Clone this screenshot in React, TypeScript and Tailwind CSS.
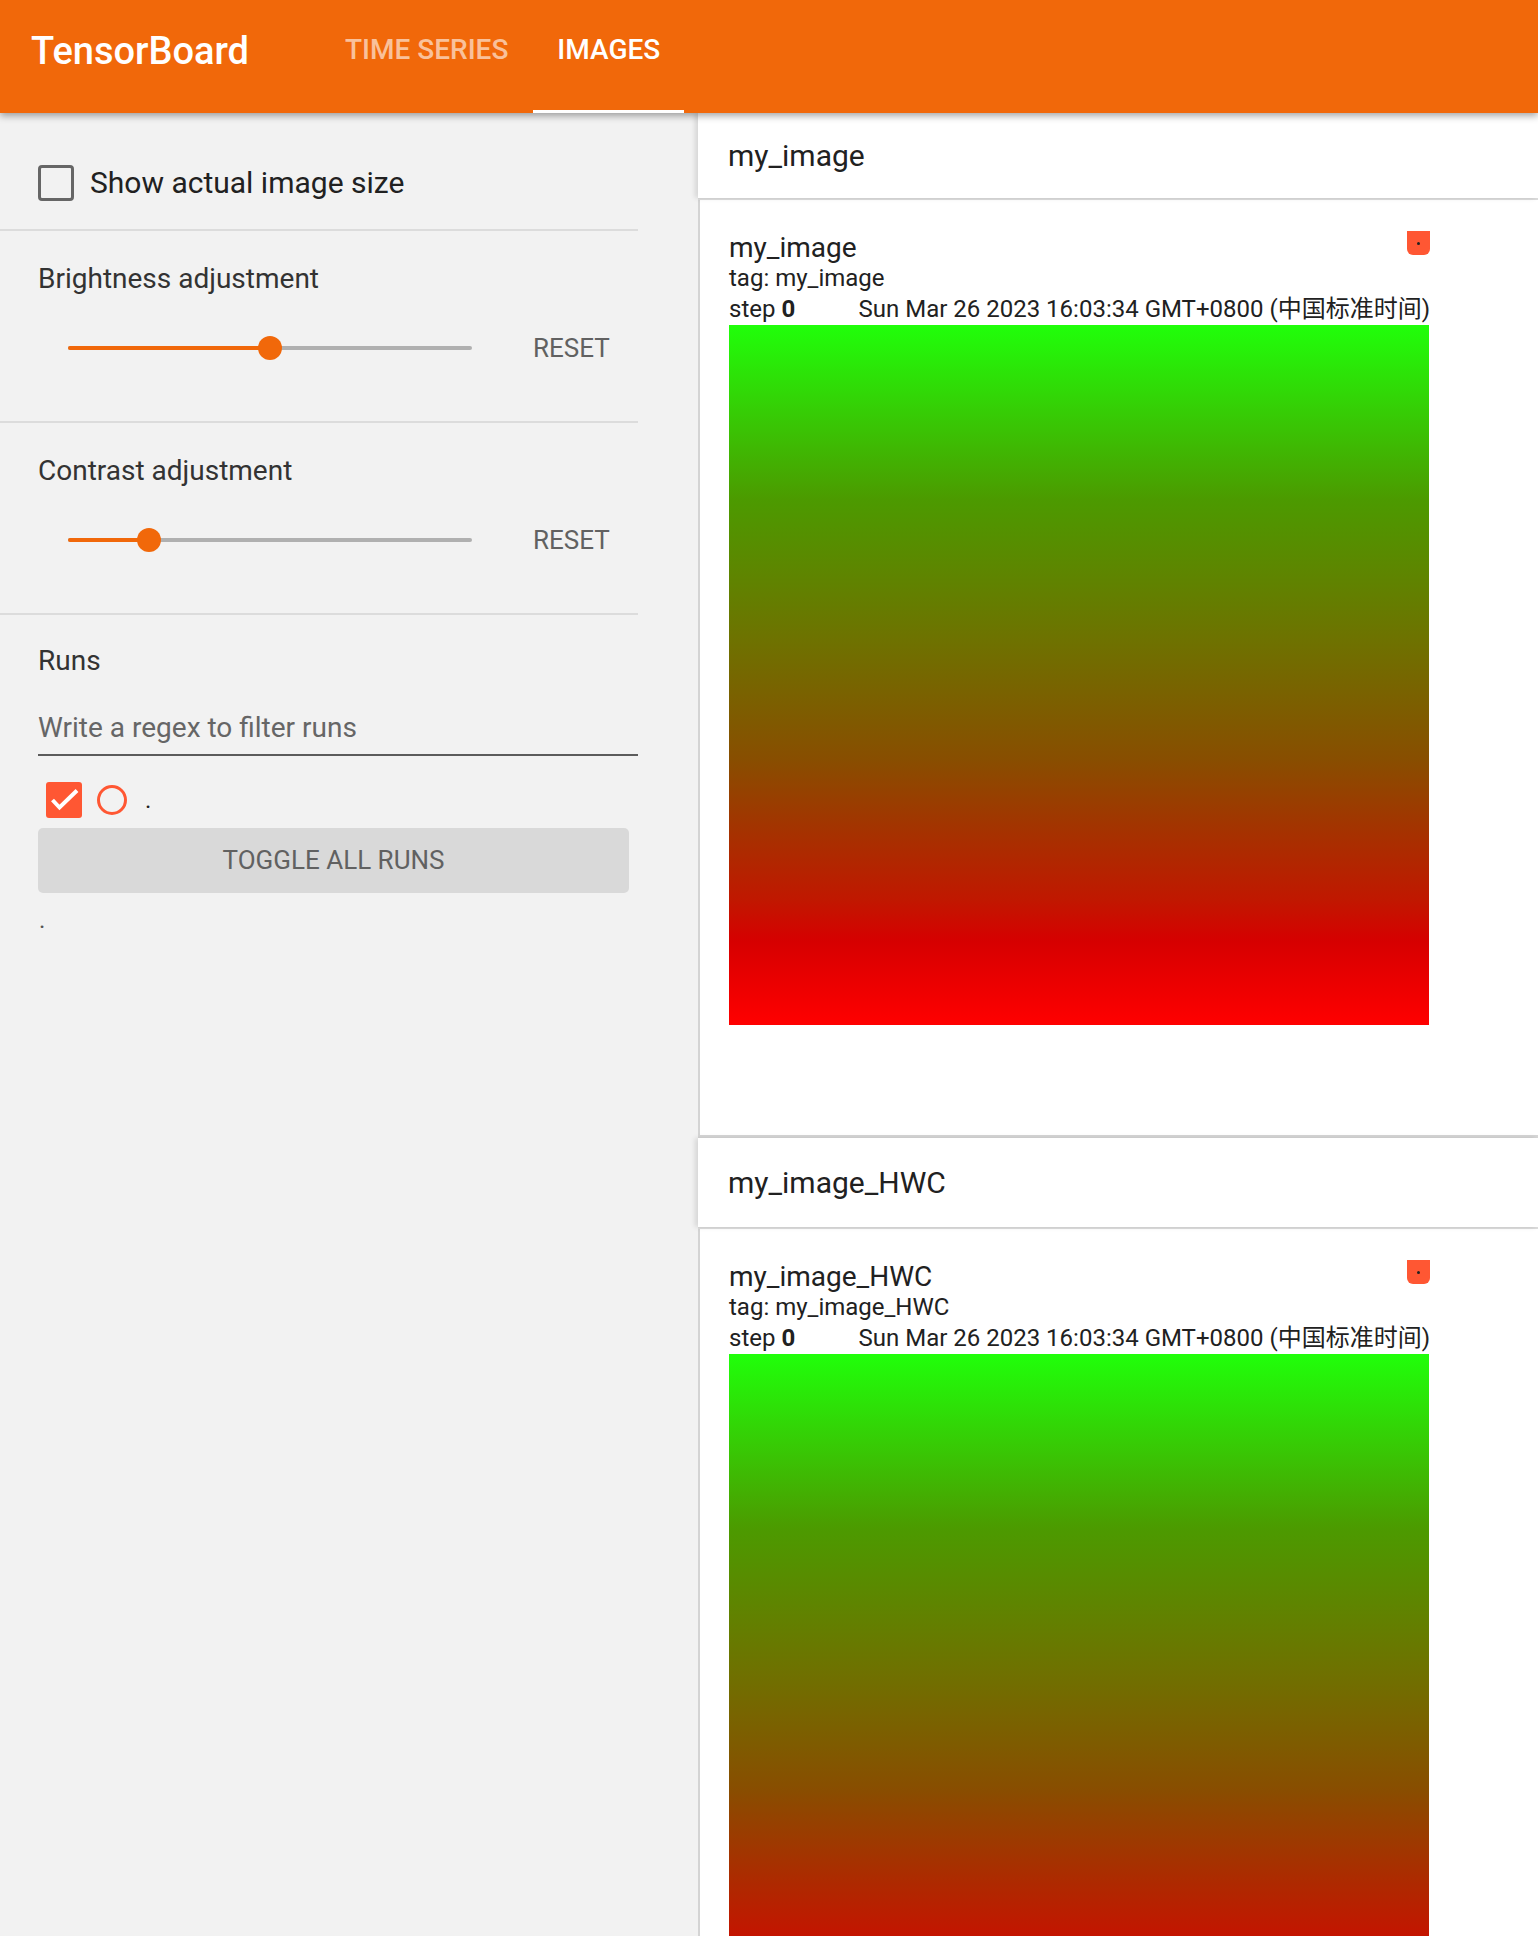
import React from "react";

function Slider({ value }: { value: number }) {
  const pct = `${value * 100}%`;
  return (
    <div className="relative w-[404px] h-[48px] ml-[30px]">
      <div className="absolute left-0 right-0 top-1/2 -translate-y-1/2 h-[4px] rounded-full bg-[#b0b0b0]" />
      <div
        className="absolute left-0 top-1/2 -translate-y-1/2 h-[4px] rounded-full bg-[#f1680a]"
        style={{ width: pct }}
      />
      <div
        className="absolute top-1/2 -translate-x-1/2 -translate-y-1/2 w-[24px] h-[24px] rounded-full bg-[#f1680a]"
        style={{ left: pct }}
      />
    </div>
  );
}

function AdjustSection({ label, value }: { label: string; value: number }) {
  return (
    <div className="h-[192px] border-b-2 border-[#dcdcdc] pl-[38px] pt-[32px]">
      <div className="text-[28px] leading-[32px] text-[#333333]">{label}</div>
      <div className="mt-[29px] flex items-center">
        <Slider value={value} />
        <button className="ml-[61px] text-[26px] text-[#616161]">RESET</button>
      </div>
    </div>
  );
}

function Sidebar() {
  return (
    <aside className="w-[698px] shrink-0 bg-[#f2f2f2]">
      <div className="w-[638px]">
        {/* actual size toggle */}
        <div className="h-[118px] border-b-2 border-[#dcdcdc] pl-[38px] pt-[52px] flex items-start">
          <div className="w-[36px] h-[36px] rounded-[4px] border-[3px] border-[#666666]" />
          <span className="ml-[16px] text-[30px] leading-[36px] text-[#212121]">Show actual image size</span>
        </div>

        <AdjustSection label="Brightness adjustment" value={0.5} />
        <AdjustSection label="Contrast adjustment" value={0.2} />

        {/* runs */}
        <div className="pl-[38px] pt-[30px]">
          <div className="text-[28px] leading-[32px] text-[#333333]">Runs</div>
          <div className="mt-[35px] pb-[10px] border-b-2 border-[#5c5c5c] text-[28px] leading-[32px] text-[#666666]">
            Write a regex to filter runs
          </div>
          <div className="mt-[26px] ml-[8px] flex items-center h-[36px]">
            <div className="w-[36px] h-[36px] rounded-[3px] bg-[#ff5733]">
              <svg width="36" height="36" viewBox="0 0 36 36" fill="none" stroke="white" strokeWidth="4">
                <path d="M6.5 18l7 7.5L31 8.5" />
              </svg>
            </div>
            <div className="ml-[15px] w-[30px] h-[30px] rounded-full border-[3px] border-[#ff5733]" />
            <span className="ml-[18px] text-[24px] text-[#212121]">.</span>
          </div>
          <button className="mt-[10px] w-[591px] h-[65px] rounded-[5px] bg-[#d9d9d9] text-[26px] text-[#616161]">
            TOGGLE ALL RUNS
          </button>
          <div className="mt-[13px] ml-[1px] text-[24px] leading-[28px] text-[#555555]">.</div>
        </div>
      </div>
    </aside>
  );
}

function ImageCard({ name }: { name: string }) {
  return (
    <div className="border-l-2 border-[#d4d4d4] bg-white pl-[29px] pt-[31px] pb-[110px]">
      <div className="w-[701px] text-[#212121]">
        <div className="flex items-start justify-between">
          <div className="text-[28px] leading-[32px] mt-[1px]">{name}</div>
          <div className="w-[23px] h-[24px] rounded-b-[6px] bg-[#ff5733] flex items-center justify-center">
            <div className="w-[3px] h-[3px] rounded-full bg-[#222222]" />
          </div>
        </div>
        <div className="text-[24px] leading-[28px]">tag: {name}</div>
        <div className="flex items-baseline justify-between text-[24px] leading-[28px] mt-[3px] mb-[2px]">
          <span>
            step <b className="font-bold">0</b>
          </span>
          <span>Sun Mar 26 2023 16:03:34 GMT+0800 (中国标准时间)</span>
        </div>
        <div className="w-[700px] h-[700px] bg-[linear-gradient(to_bottom,#20ff0a_0%,#4c9a00_25%,#6e7200_45%,#884e00_62%,#c01800_82%,#d60000_88%,#ff0000_100%)]" />
      </div>
    </div>
  );
}

function PaneHeader({ title, tall }: { title: string; tall?: boolean }) {
  return (
    <div
      className={`relative bg-white flex items-center pl-[30px] text-[30px] text-[#212121] shadow-[-3px_0_5px_rgba(0,0,0,0.12)] ${
        tall ? "h-[89px]" : "h-[85px]"
      }`}
    >
      {title}
    </div>
  );
}

export default function App() {
  return (
    <div className="h-[1936px] overflow-hidden flex flex-col bg-[#f2f2f2] font-['Roboto','Noto_Sans_CJK_SC',sans-serif]">
      <header className="relative z-10 h-[113px] shrink-0 flex items-stretch bg-[#f1680a] shadow-[0_3px_7px_rgba(0,0,0,0.35)]">
        <div className="w-[321px] pl-[31px] pb-[11px] flex items-center text-[38px] font-medium text-white">
          TensorBoard
        </div>
        <nav className="flex">
          <div className="px-[24px] pb-[13px] flex items-center text-[28px] font-medium text-white/60">TIME SERIES</div>
          <div className="relative ml-[1px] px-[24px] pb-[13px] flex items-center text-[28px] font-medium text-white">
            IMAGES
            <div className="absolute left-0 right-0 bottom-0 h-[3px] bg-white" />
          </div>
        </nav>
      </header>

      <div className="flex flex-1 min-h-0">
        <Sidebar />
        <main className="flex-1 bg-white">
          <PaneHeader title="my_image" />
          <div className="h-[2px] bg-[#dcdcdc]" />
          <ImageCard name="my_image" />
          <div className="h-[3px] bg-[#d6d6d6]" />
          <PaneHeader title="my_image_HWC" tall />
          <div className="h-[2px] bg-[#dcdcdc]" />
          <ImageCard name="my_image_HWC" />
        </main>
      </div>
    </div>
  );
}
